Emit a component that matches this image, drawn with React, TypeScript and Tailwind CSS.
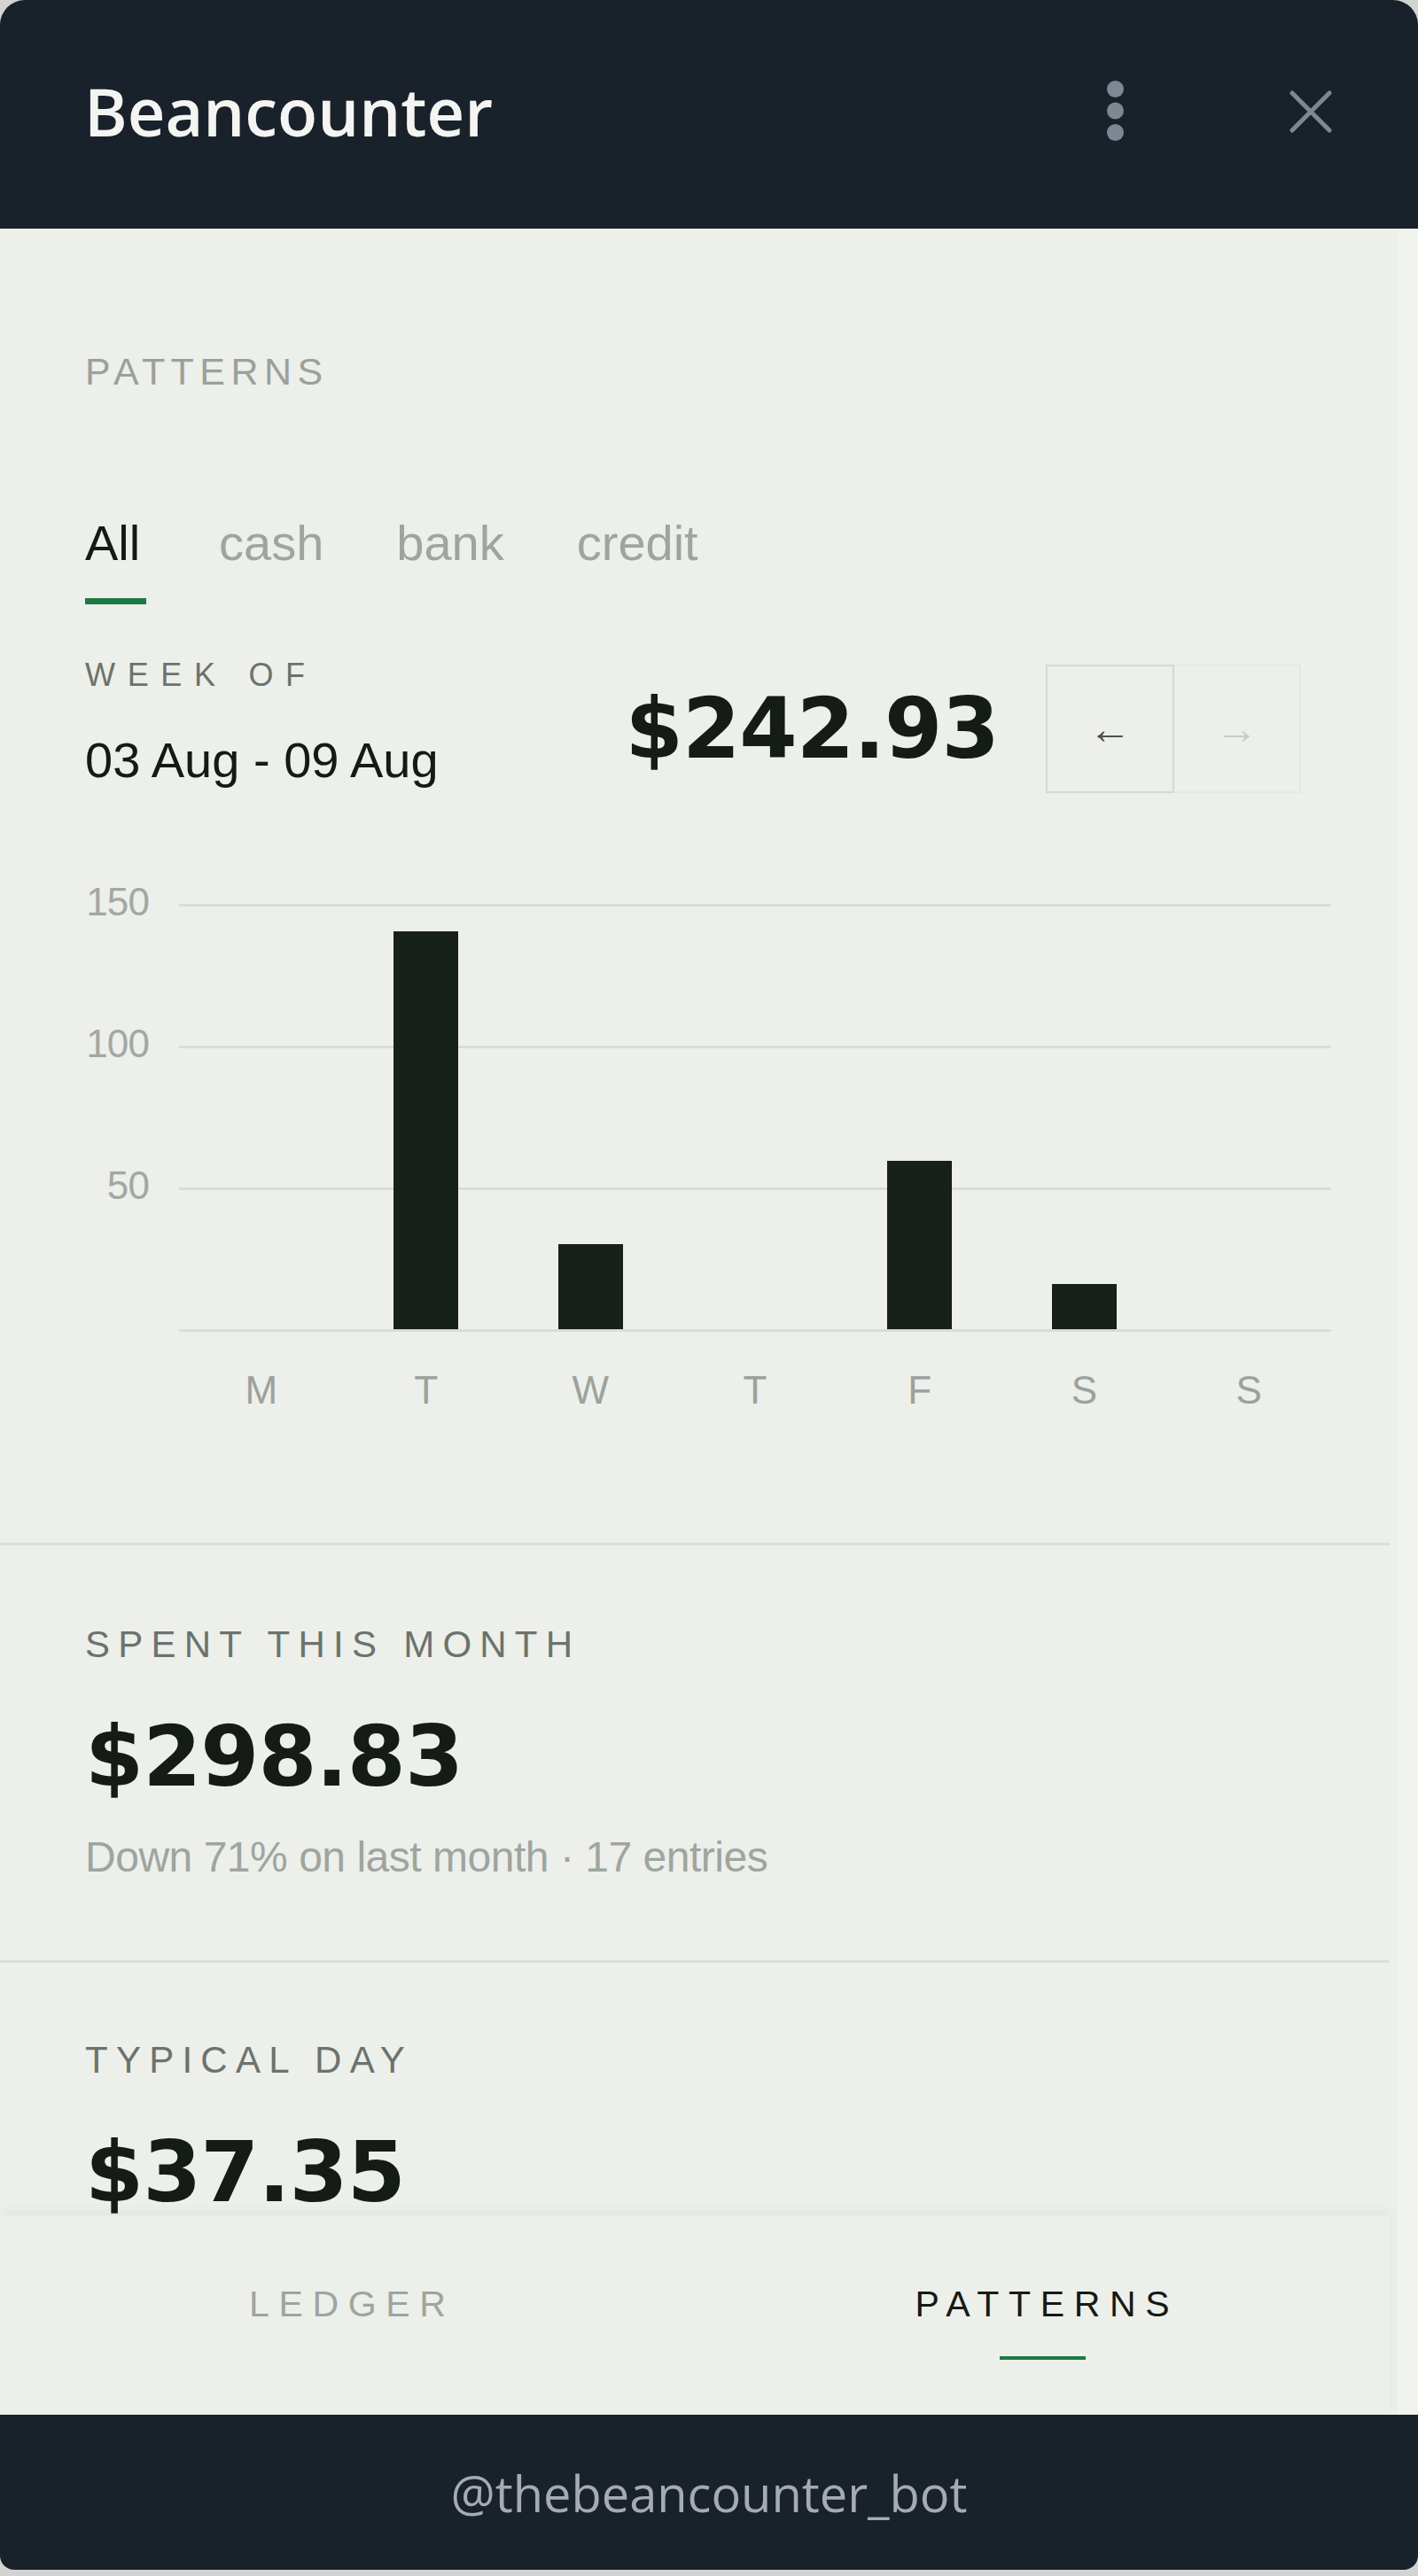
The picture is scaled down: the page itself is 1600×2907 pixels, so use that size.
import React from 'react';

const sans = "font-['Liberation_Sans',Arial,sans-serif]";
const display = "font-['DejaVu_Sans',sans-serif]";

const days = [
  { d: 'M', h: 0 },
  { d: 'T', h: 449 },
  { d: 'W', h: 96 },
  { d: 'T', h: 0 },
  { d: 'F', h: 190 },
  { d: 'S', h: 51 },
  { d: 'S', h: 0 },
];

const yLabels = [
  { v: '150', pos: 'top-[-24px]' },
  { v: '100', pos: 'top-[136px]' },
  { v: '50', pos: 'top-[296px]' },
];

const gridLines = ['top-0', 'top-[160px]', 'top-[320px]', 'top-[480px]'];

const Header = () => (
  <div className="h-[258px] shrink-0 bg-[#19212b] flex items-center justify-between pl-[95px] pr-[97px] pb-[6px]">
    <h1 className="font-['Open_Sans',sans-serif] font-semibold text-[74px] leading-none text-[#f4f5f2]">
      Beancounter
    </h1>
    <div className="flex items-center gap-[187px]">
      <svg width="19" height="68" viewBox="0 0 19 68" className="mb-[2px]">
        <circle cx="9.5" cy="9.5" r="9.5" fill="#7f8892" />
        <circle cx="9.5" cy="34" r="9.5" fill="#7f8892" />
        <circle cx="9.5" cy="58.5" r="9.5" fill="#7f8892" />
      </svg>
      <svg width="48" height="48" viewBox="0 0 48 48">
        <path d="M3 3 L45 45 M45 3 L3 45" stroke="#7f8892" strokeWidth="5" strokeLinecap="round" fill="none" />
      </svg>
    </div>
  </div>
);

const Chart = () => (
  <div className="mt-[125px]">
    <div className="flex">
      <div className="relative w-[72px] h-[483px]">
        {yLabels.map((l) => (
          <span key={l.v} className={`absolute right-0 ${l.pos} text-[44px] leading-none text-[#a2a8a3] tracking-[-0.02em]`}>
            {l.v}
          </span>
        ))}
      </div>
      <div className="relative ml-[34px] w-[1300px] h-[483px]">
        {gridLines.map((g) => (
          <div key={g} className={`absolute left-0 right-0 ${g} h-[3px] bg-[#dadcd7]`} />
        ))}
        <div className="absolute left-0 right-0 top-0 h-[480px] flex">
          {days.map((day, i) => (
            <div key={i} className="flex-1 flex items-end justify-center">
              {day.h > 0 && <div className="w-[73px] bg-[#18201a]" style={{ height: day.h }} />}
            </div>
          ))}
        </div>
      </div>
    </div>
    <div className="flex ml-[106px] w-[1300px] mt-[44px]">
      {days.map((day, i) => (
        <span key={i} className="flex-1 text-center text-[44px] leading-none text-[#9ba29d]">
          {day.d}
        </span>
      ))}
    </div>
  </div>
);

const Stat = ({ label, value, note, pt, last }: { label: string; value: string; note?: string; pt: string; last?: boolean }) => (
  <div className={`${pt} pl-[96px] ${last ? '' : 'pb-[92px] border-b-[3px] border-[#dcdfd9]'}`}>
    <div className="text-[42px] leading-none tracking-[0.22em] text-[#6b736e]">{label}</div>
    <div className={`${display} font-bold text-[95px] leading-none text-[#151b17] mt-[58px] tracking-[-0.01em]`}>{value}</div>
    {note && <div className="text-[48px] leading-none text-[#9ea59f] mt-[42px] tracking-[-0.01em]">{note}</div>}
  </div>
);

const Patterns = () => (
  <div className="h-[2242px] overflow-hidden">
    <div className="pt-[140px] pl-[96px] pr-[66px] pb-[150px] border-b-[3px] border-[#dcdfd9]">
      <div className="text-[43px] leading-none tracking-[0.15em] text-[#9aa19c]">PATTERNS</div>

      <div className="mt-[144px] flex gap-[82px]">
        {['All', 'cash', 'bank', 'credit'].map((t, i) => (
          <div key={t} className="flex flex-col">
            <span className={`text-[56px] leading-none ${i === 0 ? 'text-[#151a17]' : 'text-[#9ea59f]'}`}>{t}</span>
            <span className={`mt-[34px] h-[7px] ${i === 0 ? 'w-[69px] bg-[#1d7a42]' : 'w-0'}`} />
          </div>
        ))}
      </div>

      <div className="mt-[62px] flex items-start justify-between mr-[34px]">
        <div className="flex flex-col">
          <span className="text-[36px] leading-none tracking-[0.38em] text-[#6b736e]">WEEK OF</span>
          <span className="mt-[50px] text-[56px] leading-none text-[#151a17]">03 Aug - 09 Aug</span>
        </div>
        <div className="mt-[6px] flex items-center">
          <span className={`${display} font-bold text-[94px] leading-none text-[#151b17] mr-[53px] tracking-[-0.01em]`}>$242.93</span>
          <button className="w-[145px] h-[145px] border-2 border-[#d6d9d3] flex items-center justify-center text-[48px] text-[#4b524d]">
            ←
          </button>
          <button className="w-[143px] h-[145px] border-2 border-l-0 border-[#e6e8e3] flex items-center justify-center text-[48px] text-[#c9cdc7]">
            →
          </button>
        </div>
      </div>

      <Chart />
    </div>

    <Stat label="SPENT THIS MONTH" value="$298.83" note="Down 71% on last month · 17 entries" pt="pt-[91px]" />
    <Stat label="TYPICAL DAY" value="$37.35" pt="pt-[89px]" last />
  </div>
);

const BottomNav = () => (
  <div className="relative z-10 h-[225px] shrink-0 flex bg-[#edefea] shadow-[0_-5px_12px_rgba(0,0,0,0.045)]">
    {['LEDGER', 'PATTERNS'].map((t, i) => (
      <div key={t} className="flex-1 flex flex-col items-center pt-[80px]">
        <span className={`text-[41px] leading-none tracking-[0.26em] pl-[0.26em] ${i === 1 ? 'text-[#151a17] font-medium' : 'text-[#9ea59f]'}`}>
          {t}
        </span>
        <span className={`mt-[38px] h-[4px] ${i === 1 ? 'w-[97px] bg-[#1d7a42]' : 'w-0'}`} />
      </div>
    ))}
  </div>
);

export default function App() {
  return (
    <div className={`w-[1600px] h-[2907px] bg-[#d3d4d2] ${sans}`}>
      <div className="h-[2900px] flex flex-col rounded-t-[28px] rounded-b-[16px] overflow-hidden bg-[#edefea]">
        <Header />
        <div className="flex flex-1 min-h-0">
          <div className="w-[1568px] flex flex-col">
            <Patterns />
            <BottomNav />
          </div>
          <div className="flex-1 flex justify-end">
            <div className="w-[23px] bg-[#f1f3ee]" />
          </div>
        </div>
        <div className="h-[175px] shrink-0 bg-[#19212b] flex items-center justify-center">
          <span className="font-['Open_Sans',sans-serif] text-[56px] leading-none text-[#a5abb3]">@thebeancounter_bot</span>
        </div>
      </div>
    </div>
  );
}
